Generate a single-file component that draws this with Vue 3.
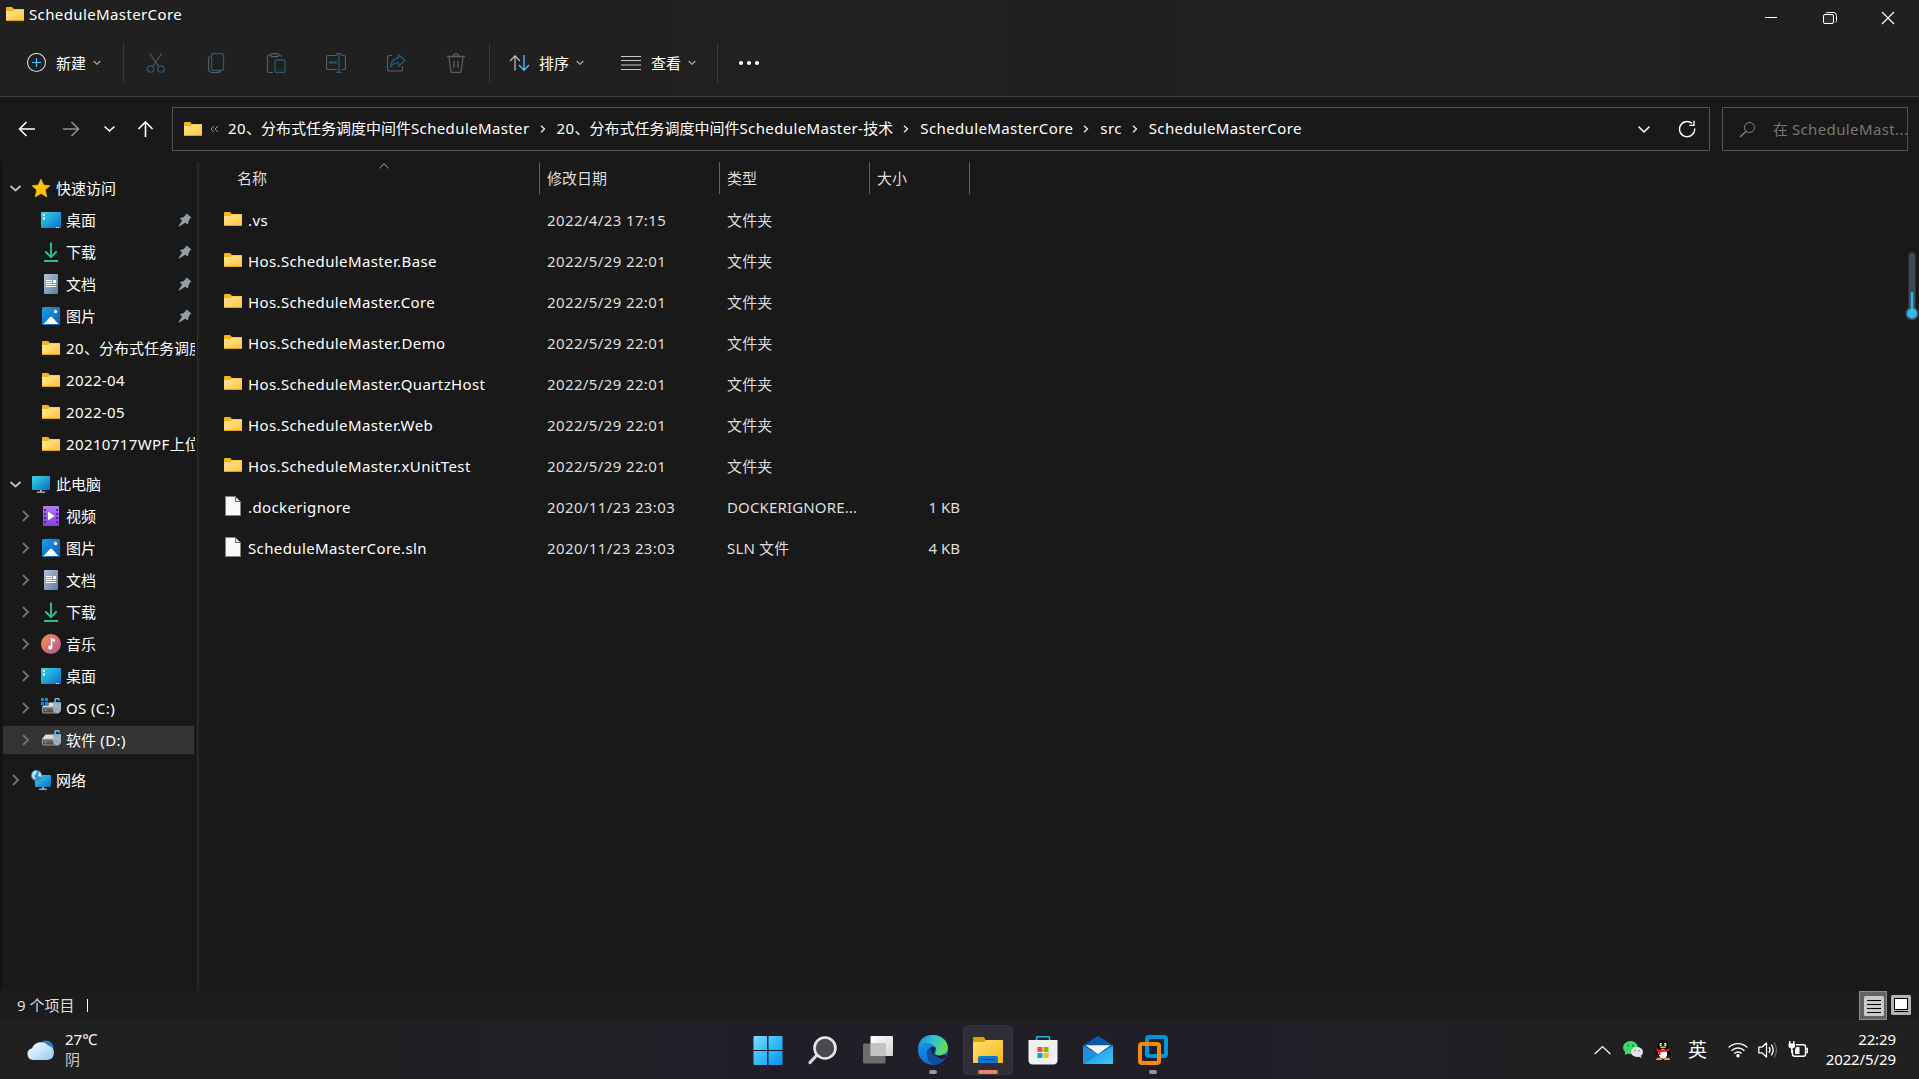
<script setup>
import { ref } from 'vue';

const path = [
  '20、分布式任务调度中间件ScheduleMaster',
  '20、分布式任务调度中间件ScheduleMaster-技术',
  'ScheduleMasterCore',
  'src',
  'ScheduleMasterCore',
];

const tools = ['cut', 'copy', 'paste', 'rename', 'share', 'trash'];

const groups = ref([
  {
    name: '快速访问', icon: 'star', open: true,
    items: [
      { name: '桌面', icon: 'desktop', pinned: true },
      { name: '下载', icon: 'download', pinned: true },
      { name: '文档', icon: 'document', pinned: true },
      { name: '图片', icon: 'picture', pinned: true },
      { name: '20、分布式任务调度', icon: 'folder' },
      { name: '2022-04', icon: 'folder' },
      { name: '2022-05', icon: 'folder' },
      { name: '20210717WPF上位', icon: 'folder' },
    ],
  },
  {
    name: '此电脑', icon: 'computer', open: true,
    items: [
      { name: '视频', icon: 'video', arrow: true },
      { name: '图片', icon: 'picture', arrow: true },
      { name: '文档', icon: 'document', arrow: true },
      { name: '下载', icon: 'download', arrow: true },
      { name: '音乐', icon: 'music', arrow: true },
      { name: '桌面', icon: 'desktop', arrow: true },
      { name: 'OS (C:)', icon: 'drive-c', arrow: true },
      { name: '软件 (D:)', icon: 'drive', arrow: true, active: true },
    ],
  },
  { name: '网络', icon: 'network', open: false, items: [] },
]);

const files = ref([
  { name: '.vs', date: '2022/4/23 17:15', type: '文件夹', folder: true },
  { name: 'Hos.ScheduleMaster.Base', date: '2022/5/29 22:01', type: '文件夹', folder: true },
  { name: 'Hos.ScheduleMaster.Core', date: '2022/5/29 22:01', type: '文件夹', folder: true },
  { name: 'Hos.ScheduleMaster.Demo', date: '2022/5/29 22:01', type: '文件夹', folder: true },
  { name: 'Hos.ScheduleMaster.QuartzHost', date: '2022/5/29 22:01', type: '文件夹', folder: true },
  { name: 'Hos.ScheduleMaster.Web', date: '2022/5/29 22:01', type: '文件夹', folder: true },
  { name: 'Hos.ScheduleMaster.xUnitTest', date: '2022/5/29 22:01', type: '文件夹', folder: true },
  { name: '.dockerignore', date: '2020/11/23 23:03', type: 'DOCKERIGNORE...', size: '1 KB' },
  { name: 'ScheduleMasterCore.sln', date: '2020/11/23 23:03', type: 'SLN 文件', size: '4 KB' },
]);

const apps = [
  { icon: 'windows' },
  { icon: 'search-app' },
  { icon: 'taskview' },
  { icon: 'edge', running: true },
  { icon: 'explorer', active: true },
  { icon: 'store' },
  { icon: 'mail' },
  { icon: 'vmware', running: true },
];

// split mixed names so that latin runs get their own tracking
const runs = (text) =>
  text.split(/([\x20-\x7e]+)/).filter(Boolean).map((t) => ({ t, latin: /^[\x20-\x7e]/.test(t) }));
</script>

<template>
  <div class="screen">
    <!-- icon definitions -->
    <svg class="defs" width="0" height="0">
      <defs>
        <linearGradient id="g-folder" x1="0" y1="0" x2="1" y2="1"><stop offset="0" stop-color="#ffe69a" /><stop offset="1" stop-color="#fdc63c" /></linearGradient>
        <linearGradient id="g-desk" x1="0" y1="0" x2="1" y2="1"><stop offset="0" stop-color="#35d8e6" /><stop offset="1" stop-color="#0a6cc9" /></linearGradient>
        <linearGradient id="g-down" x1="0" y1="0" x2="0" y2="1"><stop offset="0" stop-color="#36cf86" /><stop offset="1" stop-color="#17ab9c" /></linearGradient>
        <linearGradient id="g-doc" x1="0" y1="0" x2="1" y2="1"><stop offset="0" stop-color="#b3c5d8" /><stop offset="1" stop-color="#5c7c9e" /></linearGradient>
        <linearGradient id="g-pic" x1="0" y1="0" x2="1" y2="1"><stop offset="0" stop-color="#1d9be8" /><stop offset="1" stop-color="#0860b8" /></linearGradient>
        <linearGradient id="g-video" x1="0" y1="0" x2="0" y2="1"><stop offset="0" stop-color="#b47cf2" /><stop offset="1" stop-color="#8440dc" /></linearGradient>
        <linearGradient id="g-music" x1="0" y1="0" x2="1" y2="1"><stop offset="0" stop-color="#f68f4c" /><stop offset="0.6" stop-color="#d46c7c" /><stop offset="1" stop-color="#9a56a8" /></linearGradient>
        <linearGradient id="g-drive" x1="0" y1="0" x2="0" y2="1"><stop offset="0" stop-color="#787878" /><stop offset="1" stop-color="#3e3e3e" /></linearGradient>
        <linearGradient id="g-win" gradientUnits="userSpaceOnUse" x1="0" y1="0" x2="29" y2="29"><stop offset="0" stop-color="#7fdcff" /><stop offset="0.5" stop-color="#33bdfb" /><stop offset="1" stop-color="#0a93f5" /></linearGradient>
        <linearGradient id="g-tv" x1="0" y1="0" x2="1" y2="1"><stop offset="0" stop-color="#ffffff" /><stop offset="1" stop-color="#d4d4d4" /></linearGradient>
        <linearGradient id="g-edge1" x1="0" y1="0.3" x2="1" y2="0.6"><stop offset="0" stop-color="#1a8fdc" /><stop offset="0.45" stop-color="#2cc3d6" /><stop offset="1" stop-color="#6ae04c" /></linearGradient>
        <linearGradient id="g-edge2" x1="0" y1="0" x2="0.5" y2="1"><stop offset="0" stop-color="#1fa2e6" /><stop offset="1" stop-color="#0c68cf" /></linearGradient>
        <linearGradient id="g-exp" x1="0" y1="0" x2="1" y2="1"><stop offset="0" stop-color="#ffdf70" /><stop offset="1" stop-color="#f9b916" /></linearGradient>
        <linearGradient id="g-mail" x1="0" y1="0" x2="1" y2="1"><stop offset="0" stop-color="#1a87dc" /><stop offset="1" stop-color="#3cc8f5" /></linearGradient>
        <linearGradient id="g-cloud" x1="0" y1="0" x2="1" y2="1"><stop offset="0" stop-color="#f4fbff" /><stop offset="0.5" stop-color="#c8e6fb" /><stop offset="1" stop-color="#8ec5f0" /></linearGradient>
      </defs>

      <symbol id="folder" viewBox="0 0 18 14">
        <path d="M0 1a1 1 0 0 1 1-1h5l2 2h10v4H0z" fill="#f9b313" />
        <path d="M0 4h6.500l1.500-1.500h10V13H0z" fill="url(#g-folder)" />
        <path d="M0 13h18v1H0z" fill="#e3a21c" />
      </symbol>
      <symbol id="file" viewBox="0 0 16 20">
        <path d="M.5.5h10l5 5v14H.5z" fill="#f9f9f9" stroke="#85827f" />
        <path d="M10.500.5v5h5z" fill="#e4e4e4" stroke="#6f6c6a" />
      </symbol>
      <symbol id="star" viewBox="0 0 20 20">
        <path d="M10 1l2.700 6 6.300.7-4.700 4.300 1.500 7L10 15.500 4.200 19l1.500-7L1 7.700 7.300 7z" fill="#fdc500" stroke="#fdc500" stroke-width=".6" stroke-linejoin="round" />
      </symbol>
      <symbol id="desktop" viewBox="0 0 20 20">
        <rect x="0" y="2" width="20" height="16" rx="1" fill="url(#g-desk)" />
        <path d="M2 4h2v2H2zM2 7.500h2v2H2zM15 17h1v1h-1zM17 17h1v1h-1z" fill="#fff" />
      </symbol>
      <symbol id="download" viewBox="0 0 20 20">
        <path d="M10 0.500v14M4.300 9.500l5.700 5.700 5.700-5.700" fill="none" stroke="#2bbf8e" stroke-width="1.900" />
        <path d="M3 18h14v2H3z" fill="url(#g-down)" />
      </symbol>
      <symbol id="document" viewBox="0 0 20 20">
        <rect x="3" y="0" width="14" height="20" rx="1" fill="url(#g-doc)" />
        <path d="M5 6h6v1H5zM5 8h6v1H5zM12 6h3v3h-3zM5 10h10v1H5zM5 12h10v1H5z" fill="#fff" />
      </symbol>
      <symbol id="picture" viewBox="0 0 20 20">
        <rect x="1" y="1" width="18" height="18" rx="1.500" fill="url(#g-pic)" />
        <circle cx="14.500" cy="5.500" r="1.700" fill="#fff" />
        <path d="M2.500 18l6.500-7q1-1 2 0l6.500 7z" fill="#fff" />
      </symbol>
      <symbol id="computer" viewBox="0 0 20 20">
        <rect x="1" y="2" width="18" height="14" rx="1" fill="url(#g-desk)" />
        <path d="M9 16h2v1.500h3V19H6v-1.500h3z" fill="#9aa5ad" />
      </symbol>
      <symbol id="video" viewBox="0 0 20 20">
        <rect x="2" y="0" width="16" height="20" rx="1" fill="url(#g-video)" />
        <path d="M3 3h2v2H3zM3 7h2v2H3zM3 11h2v2H3zM3 15h2v2H3zM15 3h2v2h-2zM15 7h2v2h-2zM15 11h2v2h-2zM15 15h2v2h-2z" fill="#4e2490" />
        <path d="M7 5.500l6.500 4.500L7 14.500z" fill="#fff" />
      </symbol>
      <symbol id="music" viewBox="0 0 20 20">
        <circle cx="10" cy="10" r="10" fill="url(#g-music)" />
        <path d="M10.500 4v9" stroke="#fff" stroke-width="1.600" />
        <circle cx="9.200" cy="13.500" r="2.100" fill="#fff" />
        <path d="M9.800 4l4.200 1.200v2.600l-4.200-1z" fill="#fff" />
      </symbol>
      <symbol id="drive" viewBox="0 0 20 20">
        <path d="M4.500 4.500h12L19 9H1z" fill="#dcdcdc" />
        <rect x="1.400" y="9" width="16.600" height="6" rx="1" fill="url(#g-drive)" stroke="#b9b9b9" stroke-width=".8" />
        <path d="M4 11.500h1.500V13H4z" fill="#3de04a" />
        <path d="M14 5V2.500a2 2 0 0 1 4.200 0" fill="none" stroke="#a9b2b9" stroke-width="1.500" />
        <path d="M12 4.500h8v8.300q-4 5-8 0z" fill="#9eb2c2" />
        <path d="M12 4.500h8M12 11.500h8" stroke="#59b3e8" stroke-width=".9" />
      </symbol>
      <symbol id="drive-c" viewBox="0 0 20 20">
        <use href="#drive" width="20" height="20" />
        <path d="M0 0h7.500v7.500H0z" fill="#191919" />
        <path d="M0 0h3v3H0zM4 0h3v3H4zM0 4h3v3H0zM4 4h3v3H4z" fill="#128ce0" />
      </symbol>
      <symbol id="network" viewBox="0 0 20 20">
        <rect x="4" y="5" width="16" height="12" rx="1" fill="url(#g-desk)" />
        <path d="M11 17h2v1.500h3V20H8v-1.500h3z" fill="#9aa5ad" />
        <circle cx="5.500" cy="5.500" r="5.500" fill="#3b91c4" />
        <path d="M2 2q2-2 4-1L5 4 3 6 5 9q-4 0-4-4zM8 2q3 2 2 5L7 6z" fill="#c6e8f6" />
      </symbol>
      <symbol id="pin" viewBox="0 0 14 14">
        <path d="M8.500.5l5 4-1.500 1-1.500 3-.5 3-3-1.800L1.500 13.500.5 13l3.500-5.200L1.800 5l3-.4 2.500-2z" fill="#949da3" />
      </symbol>

      <symbol id="cut" viewBox="0 0 20 20">
        <path d="M4 .5l8.500 13M15.500.5l-8.500 13" stroke="#5c5c5c" stroke-width="1.100" />
        <circle cx="4.500" cy="16" r="3.200" fill="none" stroke="#265874" stroke-width="1.300" />
        <circle cx="15" cy="16" r="3.200" fill="none" stroke="#265874" stroke-width="1.300" />
      </symbol>
      <symbol id="copy" viewBox="0 0 20 20">
        <path d="M4.500 3Q2.500 3.500 2.500 6v9.500q0 4 4 4h5q2.500 0 3-2" fill="none" stroke="#5c5c5c" stroke-width="1.100" />
        <rect x="5.500" y=".5" width="12" height="17" rx="2" fill="none" stroke="#265874" stroke-width="1.300" />
      </symbol>
      <symbol id="paste" viewBox="0 0 20 20">
        <path d="M5 2H3Q1.500 2 1.500 3.500v14.500q0 1.500 1.500 1.500h4M12.500 2h1.500q1.500 0 1.500 2" fill="none" stroke="#5c5c5c" stroke-width="1.200" />
        <rect x="5" y=".7" width="7.500" height="3" rx="1.300" fill="none" stroke="#5c5c5c" stroke-width="1.200" />
        <rect x="9" y="7" width="10" height="12.500" rx="1.500" fill="none" stroke="#265874" stroke-width="1.300" />
      </symbol>
      <symbol id="rename" viewBox="0 0 20 20">
        <path d="M11 2.500H2.500q-2 0-2 2v10q0 2 2 2H11M15.500 2.500h2q2 0 2 2v10q0 2-2 2h-2" fill="none" stroke="#5c5c5c" stroke-width="1.200" />
        <path d="M3 9.500h8" stroke="#265874" stroke-width="2" />
        <path d="M13 .5v19M10 .7h6M10 19.400h6" stroke="#265874" stroke-width="1.400" />
      </symbol>
      <symbol id="share" viewBox="0 0 20 20">
        <path d="M6 2.500H3.500q-2 0-2 2v11.500q0 2 2 2h11q2 0 2-2V13" fill="none" stroke="#5c5c5c" stroke-width="1.200" />
        <path d="M12.500 1.800L19 7.500l-6.500 5.700V10Q7.500 9.500 4.500 14 5 6 12.500 5z" fill="none" stroke="#265874" stroke-width="1.300" stroke-linejoin="round" />
      </symbol>
      <symbol id="trash" viewBox="0 0 20 20">
        <path d="M1 3.500h18M7.500 3Q7.500.8 10 .8T12.500 3M3 3.500l1.700 14q.2 2 2 2h6.600q1.800 0 2-2L17 3.500M8 8v7M12 8v7" fill="none" stroke="#5c5c5c" stroke-width="1.300" />
      </symbol>

      <symbol id="windows" viewBox="0 0 30 30">
        <path d="M.5 2q0-1 1-1H14v14H.5zM15.500 1h13q1 0 1 1v13h-14zM.5 16H14v14H1.500q-1 0-1-1zM15.500 16h14v13q0 1-1 1h-13z" fill="url(#g-win)" />
      </symbol>
      <symbol id="search-app" viewBox="0 0 30 30">
        <path d="M2 27.500l6.500-7" stroke="#d8d8dc" stroke-width="3.200" stroke-linecap="round" />
        <circle cx="17" cy="13" r="10.500" fill="#4a494f" stroke="#e7e7ea" stroke-width="2.600" />
      </symbol>
      <symbol id="taskview" viewBox="0 0 30 30">
        <rect x="7.500" y="1" width="22.500" height="20" rx="1" fill="url(#g-tv)" />
        <rect x="0" y="8.500" width="22.500" height="20" rx="1" fill="#8a8a8a" fill-opacity=".72" />
        <path d="M7.500 8.500h15V21h-15z" fill="#c2c2c2" />
      </symbol>
      <symbol id="edge" viewBox="0 0 30 30">
        <circle cx="15" cy="15" r="15" fill="url(#g-edge2)" />
        <path d="M.3 12Q2 0 15 0q10 0 14 8.500 3 8-4 11-4 2-8.500-.5 3-3 1-6Q14.500 8 9 8 3 8 .3 12z" fill="url(#g-edge1)" />
        <path d="M9 17q0-4 5-5.500 3 .5 4 3-3 2-1 5 4 3.500 11.500 1-4 9-13 9.500Q9 28 9 17z" fill="#114f9e" />
        <path d="M18.200 13Q14.500 10.500 13 13q-1 4 4 7.500-2-3 1.200-7.500z" fill="#1d2431" />
        <path d="M16.500 19.300q4 2.500 9 .3l3 .4-1 3q-7 2-11-3.700z" fill="#201f28" />
      </symbol>
      <symbol id="explorer" viewBox="0 0 30 30">
        <path d="M0 3q0-1 1-1h9q1 0 1.500 1l1.500 3H30v6H0z" fill="#dfa106" />
        <path d="M0 7h11l2-2h17v23H0z" fill="url(#g-exp)" />
        <path d="M5 28v-5q0-2 2-2h16q2 0 2 2v5z" fill="#0e79d0" />
        <path d="M8.500 24.500h13" stroke="#0a4c8e" stroke-width="1.200" />
      </symbol>
      <symbol id="store" viewBox="0 0 30 30">
        <path d="M8.500 6V2.500q0-.8.8-.8h11.400q.8 0 .8.800V6" fill="none" stroke="#26b4ee" stroke-width="1.600" />
        <path d="M.5 5h29v20q0 4.500-4.500 4.500H5Q.5 29.500.5 25z" fill="#f0f0f1" />
        <path d="M9.500 12h5v5h-5z" fill="#f25022" /><path d="M15.500 12h5v5h-5z" fill="#7fba00" />
        <path d="M9.500 18h5v5h-5z" fill="#00a4ef" /><path d="M15.500 18h5v5h-5z" fill="#ffb900" />
      </symbol>
      <symbol id="mail" viewBox="0 0 30 30">
        <path d="M0 10.500L14 1.500q1-.6 2 0l14 9V14H0z" fill="#0b59aa" />
        <path d="M0 10.500l15 8.500 15-8.500V28q0 1-1 1H1q-1 0-1-1z" fill="#1f8fe0" />
        <path d="M30 10.500V28q0 1-1 1H1z" fill="url(#g-mail)" />
        <path d="M2.500 10.200h25L16 18.500q-1 .7-2 0z" fill="#f3f3f3" />
      </symbol>
      <symbol id="vmware" viewBox="0 0 30 30">
        <rect x="9" y="2" width="19" height="19" rx="2" fill="none" stroke="#0095d9" stroke-width="4" />
        <rect x="2" y="9" width="19" height="19" rx="2" fill="none" stroke="#f68b0a" stroke-width="4" />
        <path d="M9 13v6q0 2 2 2h7" fill="none" stroke="#0095d9" stroke-width="4" />
      </symbol>

      <symbol id="cloud" viewBox="0 0 28 20">
        <circle cx="19" cy="8" r="7.500" fill="#2c7dd2" />
        <path d="M6 20a6 6 0 0 1-1-11.800A9.500 9.500 0 0 1 21 5.500a7.400 7.400 0 0 1 0 14.500z" fill="url(#g-cloud)" />
      </symbol>
      <symbol id="wechat" viewBox="0 0 20 17">
        <ellipse cx="7.500" cy="6.500" rx="7.500" ry="6.500" fill="#3ddc6c" /><path d="M2 10v4l4-2z" fill="#3ddc6c" />
        <circle cx="5" cy="4.500" r=".9" fill="#1d6b37" /><circle cx="10" cy="4.500" r=".9" fill="#1d6b37" />
        <ellipse cx="14" cy="11" rx="6" ry="5" fill="#e3e3e3" /><path d="M17 14l2 3-4-1.500z" fill="#e3e3e3" />
        <circle cx="12" cy="9.800" r=".8" fill="#777" /><circle cx="16" cy="9.800" r=".8" fill="#777" />
      </symbol>
      <symbol id="qq" viewBox="0 0 16 20">
        <path d="M2 9q-2 3-1.500 6.500L3 14zM14 9q2 3 1.500 6.500L13 14z" fill="#050505" />
        <ellipse cx="8" cy="6.500" rx="6" ry="6.500" fill="#050505" /><ellipse cx="8" cy="13.500" rx="6" ry="5.500" fill="#050505" />
        <ellipse cx="8" cy="14" rx="4.200" ry="4.700" fill="#fff" />
        <ellipse cx="5.800" cy="4.500" rx="1.300" ry="1.700" fill="#fff" /><ellipse cx="10.200" cy="4.500" rx="1.300" ry="1.700" fill="#fff" />
        <circle cx="6.200" cy="4.700" r=".6" fill="#000" /><circle cx="9.800" cy="4.700" r=".6" fill="#000" />
        <ellipse cx="8" cy="7.200" rx="3.200" ry="1" fill="#f8a51b" />
        <path d="M1.500 8.500Q8 11.500 14.500 8.500v2Q8 13 5.500 12v3H3v-3.500L1.500 11z" fill="#e8202a" />
        <path d="M1 19q3-3 6 0v1H1zM9 19q3-3 6 0v1H9z" fill="#f8a51b" />
      </symbol>
    </svg>

    <header class="top">
      <div class="titlebar">
        <svg class="ic-folder"><use href="#folder" /></svg>
        <span class="title latin">ScheduleMasterCore</span>
        <div class="win-btns">
          <svg width="58" height="36"><path d="M23 17.500h12" stroke="#fff" /></svg>
          <svg width="58" height="36"><path d="M26 13.500q0-1 1.500-1h6q3 0 3 3v5q0 1.500-1 1.800" fill="none" stroke="#fff" /><rect x="23.500" y="14.500" width="10" height="9" rx="1.500" fill="#555" fill-opacity=".3" stroke="#fff" /></svg>
          <svg width="59" height="36"><path d="M24 12l12 12M36 12l-12 12" stroke="#fff" stroke-width="1.200" /></svg>
        </div>
      </div>
      <div class="commands">
        <div class="cmd new">
          <svg width="20" height="20"><circle cx="9.500" cy="9.500" r="9" fill="none" stroke="#d6d6d6" stroke-width="1.100" /><path d="M5 9.500h9M9.500 5v9" stroke="#4cc2ff" stroke-width="1.200" /></svg>
          <span>新建</span>
          <svg class="chev" width="8" height="6"><path d="M.7 1l3.300 3.300L7.300 1" /></svg>
        </div>
        <i class="sep"></i>
        <div class="tools">
          <svg v-for="t in tools" :key="t" width="20" height="20"><use :href="'#' + t" /></svg>
        </div>
        <i class="sep"></i>
        <div class="cmd sort">
          <svg width="21" height="18"><path d="M6 16.500V2M1 7l5-5.200L11 7" fill="none" stroke="#c4c4c4" stroke-width="1.200" /><path d="M15 1v15M10 11l5 5.200 5-5.200" fill="none" stroke="#4cc2ff" stroke-width="1.300" /></svg>
          <span>排序</span>
          <svg class="chev" width="8" height="6"><path d="M.7 1l3.300 3.300L7.300 1" /></svg>
        </div>
        <div class="cmd view">
          <svg width="20" height="14"><path d="M0 .5h20M0 4.500h20M0 9h20M0 13.500h20" stroke="#c9c9c9" stroke-width="1" /></svg>
          <span>查看</span>
          <svg class="chev" width="8" height="6"><path d="M.7 1l3.300 3.300L7.300 1" /></svg>
        </div>
        <i class="sep"></i>
        <svg class="dots" width="22" height="6"><circle cx="3" cy="3" r="2.100" fill="#fff" /><circle cx="11" cy="3" r="2.100" fill="#fff" /><circle cx="19" cy="3" r="2.100" fill="#fff" /></svg>
      </div>
    </header>

    <div class="addressbar">
      <svg class="nav" width="172" height="46" fill="none" stroke="#fff" stroke-width="1.600">
        <path d="M35 22H20M26.500 15L19.500 22l7 7" />
        <path d="M63 22h15M71.500 15l7 7-7 7" stroke="#8f8f8f" />
        <path d="M104.500 19.500l5 4.500 5-4.500" />
        <path d="M145.500 30V15M138.500 22l7-7 7 7" />
      </svg>
      <div class="crumbs">
        <svg class="ic-folder"><use href="#folder" /></svg>
        <svg class="more" width="9" height="8"><path d="M4 1L1 4l3 3M8 1L5 4l3 3" fill="none" stroke="#999" /></svg>
        <template v-for="(seg, i) in path" :key="i">
          <span class="seg"><span v-for="r in runs(seg)" :key="r.t" :class="{ latin: r.latin }">{{ r.t }}</span></span>
          <svg v-if="i < path.length - 1" class="arrow" width="6" height="8"><path d="M1 .7L4.500 4 1 7.300" fill="none" stroke="#eee" stroke-width="1.300" /></svg>
        </template>
        <svg class="drop" width="14" height="9"><path d="M1.500 1.500L7 7l5.500-5.500" fill="none" stroke="#fff" stroke-width="1.500" /></svg>
        <svg class="refresh" width="18" height="18"><path d="M16.700 8.500A7.600 7.600 0 1 1 14 3.300M16 .8v4.600h-4.600" fill="none" stroke="#fff" stroke-width="1.400" /></svg>
      </div>
      <div class="search">
        <svg width="17" height="17"><circle cx="10.500" cy="6.500" r="5" fill="none" stroke="#858585" /><path d="M7 10.500L1 16" stroke="#858585" stroke-width="1.200" /></svg>
        <span>在 <span class="latin">ScheduleMast...</span></span>
      </div>
    </div>

    <main class="main">
      <nav class="sidebar">
        <section v-for="g in groups" :key="g.name" class="group">
          <div class="row head">
            <svg class="exp" width="12" height="12" :class="{ open: g.open }"><path v-if="g.open" d="M1.500 4L6.500 8.500 11.500 4" /><path v-else d="M4 1l5 5-5 5" /></svg>
            <svg class="ic"><use :href="'#' + g.icon" /></svg>
            <span>{{ g.name }}</span>
          </div>
          <div v-for="item in g.items" :key="item.name" class="row child" :class="{ active: item.active }">
            <span class="exp-slot"><svg v-if="item.arrow" class="exp" width="12" height="12"><path d="M4 1l5 5-5 5" /></svg></span>
            <svg v-if="item.icon === 'folder'" class="ic-folder"><use href="#folder" /></svg>
            <svg v-else class="ic"><use :href="'#' + item.icon" /></svg>
            <span class="label"><span v-for="r in runs(item.name)" :key="r.t" :class="{ latin: r.latin }">{{ r.t }}</span></span>
            <svg v-if="item.pinned" class="pin" width="14" height="14"><use href="#pin" /></svg>
          </div>
        </section>
      </nav>
      <div class="splitter"></div>
      <div class="content">
        <div class="grid thead">
          <div class="c-name">名称<svg class="caret" width="10" height="6"><path d="M.5 5.200L5 .8l4.500 4.400" fill="none" stroke="#aaa" /></svg></div>
          <div>修改日期</div>
          <div>类型</div>
          <div>大小</div>
        </div>
        <div v-for="f in files" :key="f.name" class="grid trow">
          <div class="c-file">
            <svg v-if="f.folder" class="ic-folder"><use href="#folder" /></svg>
            <svg v-else class="ic-file"><use href="#file" /></svg>
            <span class="latin">{{ f.name }}</span>
          </div>
          <div class="date">{{ f.date }}</div>
          <div class="type">{{ f.type }}</div>
          <div class="size">{{ f.size }}</div>
        </div>
      </div>
      <div class="thermo"><svg width="14" height="70">
        <rect x="3.500" y=".5" width="7" height="60" rx="3.500" fill="#3b4a55" />
        <circle cx="7" cy="61.500" r="6.800" fill="#34505f" />
        <path d="M7 40v20" stroke="#2fb7ea" stroke-width="2.400" />
        <circle cx="7" cy="61.500" r="5" fill="#35b9e9" />
      </svg></div>
    </main>

    <div class="statusbar">
      <span>9 个项目</span><i></i>
      <svg width="54" height="29">
        <rect x=".5" y=".5" width="27" height="28" fill="#636363" stroke="#8b8b8b" />
        <rect x="5" y="5" width="20" height="20" rx="1.500" fill="#cacaca" />
        <path d="M8 9.500h14M8 13.500h14M8 17.500h14M8 21.500h14" stroke="#000" />
        <rect x="32" y="4" width="20" height="20" rx="1.500" fill="#b4b4b4" />
        <rect x="35.500" y="7.500" width="13" height="11" fill="#fff" stroke="#000" />
        <path d="M35 20.500h14" stroke="#000" />
      </svg>
    </div>

    <footer class="taskbar">
      <div class="weather">
        <svg width="28" height="20"><use href="#cloud" /></svg>
        <div class="lines"><span>27℃</span><span class="dim">阴</span></div>
      </div>
      <div class="apps">
        <div v-for="a in apps" :key="a.icon" class="app" :class="{ active: a.active, running: a.running }">
          <svg width="30" height="30"><use :href="'#' + a.icon" /></svg>
        </div>
      </div>
      <div class="tray">
        <svg width="17" height="10"><path d="M.7 9l7.800-7.500L16.300 9" fill="none" stroke="#fff" stroke-width="1.200" /></svg>
        <svg class="wechat" width="20" height="17"><use href="#wechat" /></svg>
        <svg class="qq" width="16" height="20"><use href="#qq" /></svg>
        <span class="ime">英</span>
        <svg class="wifi" width="20" height="16" fill="none" stroke="#fff" stroke-width="1.400"><path d="M.7 5.500a13.200 13.200 0 0 1 18.600 0M3.600 8.700a9 9 0 0 1 12.800 0M6.400 11.500a5.100 5.100 0 0 1 7.200 0" /><circle cx="10" cy="13.800" r="1.700" fill="#fff" stroke="none" /></svg>
        <svg class="vol" width="20" height="18" fill="none" stroke="#fff" stroke-width="1.300"><path d="M.8 6.200h3L8.500 2v14l-4.700-4.200h-3z" stroke-linejoin="round" /><path d="M11 6.200q2 2.800 0 5.600M13.300 3.700q3.800 5.300 0 10.600" /><path d="M16 1.500q5 7.500 0 15" stroke="#666" /></svg>
        <svg class="bat" width="20" height="17" fill="none" stroke="#fff" stroke-width="1.400"><path d="M8 3.700h7.500q2 0 2 2v7.500q0 2-2 2h-9q-2 0-2-2V9M18 7.500h1.300v4H18" /><path d="M8 6h3.500v7H7V9z" fill="#fff" stroke="none" /><path d="M1.800 0v3M5.800 0v3M3.800 7v5" /><path d="M.5 2.500h6.600v2.300q0 2.700-3.300 2.700T.5 4.800z" fill="#fff" stroke="none" /></svg>
        <div class="clock"><span>22:29</span><span>2022/5/29</span></div>
      </div>
    </footer>
  </div>
</template>

<style>
body { background: #191919; overflow: hidden; }
</style>

<style scoped>
.screen {
  width: 1919px; height: 1079px; overflow: hidden; display: flex; flex-direction: column;
  background: #191919; color: #fff; font: 15px/20px "Noto Sans", "Noto Sans CJK SC", sans-serif;
}
.screen * { box-sizing: border-box; }
svg { display: block; flex: none; }
span { white-space: nowrap; }
.defs { position: absolute; }
.latin { letter-spacing: 0.38px; }
.ic-folder { width: 18px; height: 14px; }
.ic { width: 20px; height: 20px; }

.top { height: 97px; border-bottom: 1px solid #3d3d3d; background: linear-gradient(90deg, #202020 25%, #222022 45%, #21201e 55%, #222022 80%, #202020 95%); }
.titlebar { height: 36px; display: flex; align-items: flex-start; padding-left: 6px; }
.titlebar .ic-folder { margin-top: 7px; }
.title { margin: 4px auto 0 5px; }
.win-btns { display: flex; margin-right: 2px; }
.commands { height: 60px; display: flex; align-items: center; padding: 0 0 6px 27px; }
.commands .cmd { display: flex; align-items: center; }
.cmd.new span { margin: 0 7px 0 9px; }
.cmd.new .chev { margin-right: 22px; }
.chev { fill: none; stroke: #b5b5b5; stroke-width: 1.100; }
.sep { width: 1px; height: 40px; background: #383838; }
.tools { display: flex; gap: 40px; margin: 0 23px 0 22px; }
.sort { margin-left: 19px; }
.sort span, .view span { margin: 0 7px 0 9px; }
.view { margin: 0 21px 0 37px; }
.view span { margin-left: 10px; }
.dots { margin-left: 20px; }

.addressbar { height: 64px; display: flex; align-items: flex-start; padding-top: 10px; }
.crumbs { width: 1538px; height: 44px; border: 1px solid #535353; display: flex; align-items: center; padding: 0 13px 0 11px; }
.crumbs .more { margin: 0 9px 0 8px; }
.seg { margin-bottom: 2px; }
.arrow { margin: 0 11px 0 10px; }
.drop { margin-left: auto; }
.refresh { margin-left: 27px; }
.search { width: 186px; height: 44px; margin-left: 12px; border: 1px solid #535353; display: flex; align-items: center; padding-left: 16px; color: #777; overflow: hidden; }
.search > span { margin: 0 0 0 17px; }

.main { height: 830px; display: flex; position: relative; border-left: 3px solid #131313; }
.sidebar { width: 192px; padding-top: 11px; overflow: hidden; }
.group { display: flow-root; margin-bottom: 8px; }
.row { height: 32px; display: flex; align-items: center; }
.head { padding-left: 6px; }
.head .ic { margin: 0 5px 0 10px; }
.child .label { margin-left: 5px; overflow: hidden; }
.exp { fill: none; stroke: #6e6e6e; stroke-width: 2; }
.exp.open { stroke: #bbb; }
.exp-slot { width: 38px; padding-left: 16px; flex: none; }
.child .ic-folder { margin: 0 1px; }
.child.active { height: 28px; margin: 2px 1px 2px 0; background: #333; border: 1px solid #373737; border-radius: 1px; }
.child.active .exp-slot { width: 37px; padding-left: 15px; }
.pin { margin: 0 3px 0 auto; }
.splitter { width: 5px; margin-top: 1px; background: linear-gradient(90deg, #141414 0 1px, #202020 1px 2px, #2b2b2b 2px 3px, #202020 3px); }
.content { width: 1719px; }

.grid { display: grid; grid-template-columns: 340px 180px 150px 100px; }
.thead { height: 33px; padding-top: 1px; margin-bottom: 5px; color: #dedede; }
.thead > div { border-right: 1px solid #636363; padding: 6px 0 0 7px; }
.thead .c-name { padding-left: 37px; position: relative; }
.caret { position: absolute; left: 179px; top: 1px; }
.trow { height: 41px; align-items: center; color: #dedede; }
.trow > div { padding-left: 7px; }
.trow .c-file { display: flex; align-items: center; padding-left: 24px; color: #fff; }
.c-file .ic-folder { margin: 0 6px 2px 0; }
.c-file .ic-file { width: 16px; height: 20px; margin: 0 7px 1px 1px; }
.date { letter-spacing: 0.38px; }
.type { letter-spacing: 0.15px; }
.trow .size { text-align: right; padding-right: 10px; }
.thermo { position: absolute; right: 0; top: 91px; }

.statusbar { height: 29px; background: #1c1c1c; display: flex; align-items: center; padding-left: 17px; color: #dedede; }
.statusbar span { margin-bottom: 2px; }
.statusbar i { width: 1px; height: 13px; background: #fff; margin-left: 13px; }
.statusbar svg { margin-left: auto; margin-right: 6px; }

.taskbar { height: 59px; display: grid; grid-template-columns: 740px 1fr 370px; background: linear-gradient(90deg, #202020 12%, #201f28 38%, #201f28 66%, #202022 80%, #202020); }
.weather { display: flex; align-items: center; padding-left: 27px; gap: 10px; }
.lines { display: flex; flex-direction: column; margin-bottom: 1px; }
.dim { color: #c9c9c9; }
.apps { display: flex; gap: 5px; padding: 5px 0 0 3px; }
.app { width: 50px; height: 50px; border-radius: 5px; position: relative; display: flex; justify-content: center; padding-top: 9px; border: 1px solid transparent; }
.app.active { background: #2f2e37; border-color: #37363e; }
.app.active::after, .app.running::after { content: ""; position: absolute; bottom: 0; left: 20px; width: 8px; height: 4px; border-radius: 2px; background: #98979c; }
.app.active::after { left: 14px; width: 20px; background: #f08068; }
.tray { display: flex; align-items: center; justify-content: flex-end; padding-right: 23px; }
.wechat { margin-left: 12px; }
.qq { margin-left: 12px; }
.ime { font-size: 19px; margin: 0 21px 0 17px; }
.vol { margin: 0 10px; }
.clock { width: 88px; display: flex; flex-direction: column; align-items: flex-end; margin-bottom: 2px; letter-spacing: -0.1px; }
</style>
